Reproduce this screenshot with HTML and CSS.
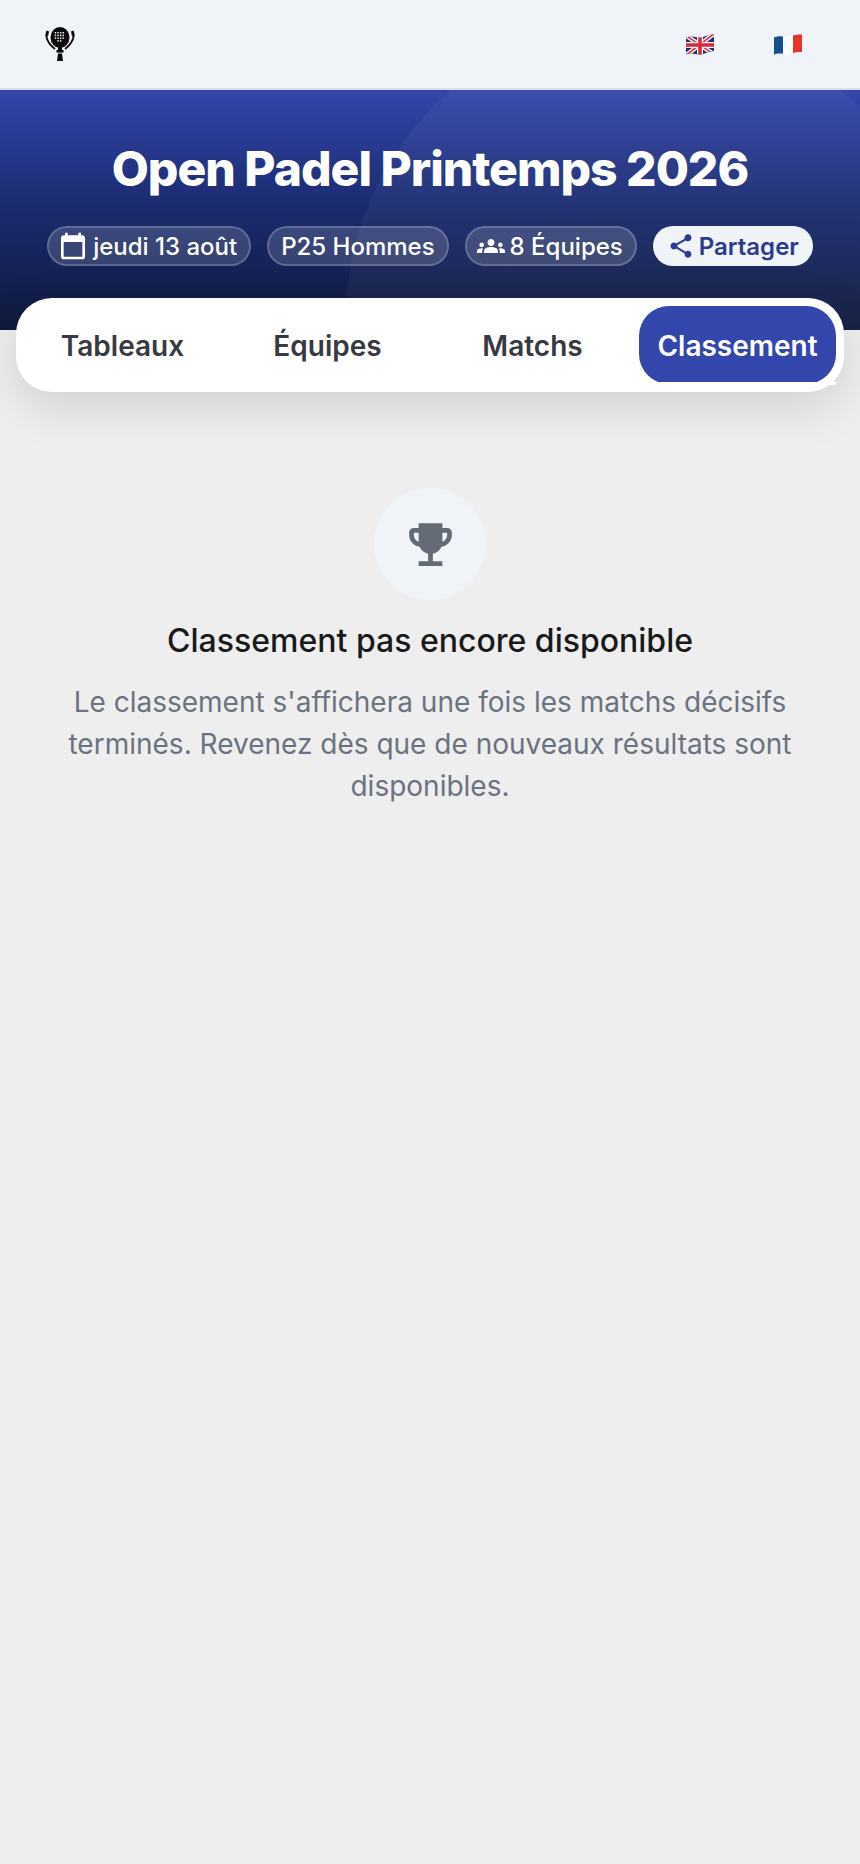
FILE: index.html
```html
<!DOCTYPE html>
<html lang="fr">
<head>
    <meta charset="UTF-8">
    <meta name="viewport" content="width=device-width, initial-scale=1.0">
    <title>Open Padel Printemps 2026</title>
    <link rel="stylesheet" href="styles.css">
</head>
<body>
    <header class="topbar">
        <a class="logo" href="#">
            <svg width="40" height="40" viewBox="0 0 40 40">
                <ellipse cx="20" cy="13.500" rx="9.500" ry="10.500" fill="#0a0a0a"/>
                <path d="M7.500 7.500C5 11 6.500 18.500 15 25" fill="none" stroke="#0a0a0a" stroke-width="1.800"/>
                <path d="M32.500 7.500C35 11 33.500 18.500 25 25" fill="none" stroke="#0a0a0a" stroke-width="1.800"/>
                <path d="M6.500 6.500l2.500 1-1 5-2.500-1z" fill="#0a0a0a"/>
                <path d="M33.500 6.500l-2.500 1 1 5 2.500-1z" fill="#0a0a0a"/>
                <g fill="#e8ecf2">
                    <rect x="14.700" y="8" width="1.500" height="1.500"/><rect x="17.300" y="8" width="1.500" height="1.500"/><rect x="19.900" y="8" width="1.500" height="1.500"/><rect x="22.500" y="8" width="1.500" height="1.500"/>
                    <rect x="14.700" y="10.700" width="1.500" height="1.500"/><rect x="17.300" y="10.700" width="1.500" height="1.500"/><rect x="19.900" y="10.700" width="1.500" height="1.500"/><rect x="22.500" y="10.700" width="1.500" height="1.500"/>
                    <rect x="14.700" y="13.400" width="1.500" height="1.500"/><rect x="17.300" y="13.400" width="1.500" height="1.500"/><rect x="19.900" y="13.400" width="1.500" height="1.500"/><rect x="22.500" y="13.400" width="1.500" height="1.500"/>
                    <rect x="17.300" y="16.100" width="1.500" height="1.500"/><rect x="19.900" y="16.100" width="1.500" height="1.500"/>
                </g>
                <rect x="18" y="23" width="4" height="3" fill="#0a0a0a"/>
                <rect x="16.500" y="26" width="7" height="2.600" fill="#0a0a0a"/>
                <path d="M18 29.500h4l1 7.500h-6z" fill="#0a0a0a"/>
            </svg>
        </a>
        <nav class="langs">
            <a class="lang" href="#">
                <svg width="30" height="24" viewBox="0 0 30 24">
                    <defs>
                        <clipPath id="waveUk"><path d="M1 5.500C8 2.500 12 7 18 5c4-1.300 7-2.300 11-3v17c-4 .6-7 1.700-11 3-6 2-10-2.500-17 .5z"/></clipPath>
                    </defs>
                    <g clip-path="url(#waveUk)">
                        <rect width="30" height="24" fill="#1f2f6e"/>
                        <path d="M0 3l30 20M30 1L0 24" stroke="#f4f4f6" stroke-width="4.500"/>
                        <path d="M0 3l30 20M30 1L0 24" stroke="#d8283c" stroke-width="1.500"/>
                        <path d="M15 0v24M0 13h30" stroke="#f4f4f6" stroke-width="6"/>
                        <path d="M15 0v24M0 13h30" stroke="#d8283c" stroke-width="3.500"/>
                    </g>
                </svg>
            </a>
            <a class="lang" href="#">
                <svg width="30" height="24" viewBox="0 0 30 24">
                    <defs>
                        <clipPath id="waveFr"><path d="M1 5.500C8 2.500 12 6 18 4c4-1.300 7-1.500 11-1.500V20c-4 0-7 .2-11 1.500-6 2-10-1.500-17 1z"/></clipPath>
                    </defs>
                    <g clip-path="url(#waveFr)">
                        <rect width="10" height="24" fill="#14508f"/>
                        <rect x="10" width="10" height="24" fill="#ffffff"/>
                        <rect x="20" width="10" height="24" fill="#e8352c"/>
                    </g>
                </svg>
            </a>
        </nav>
    </header>

    <section class="hero">
        <div class="hero-circle"></div>
        <h1>Open Padel Printemps 2026</h1>
        <div class="chips">
            <span class="chip">
                <svg class="icon-date" width="32" height="32" viewBox="0 0 24 24" fill="currentColor"><path d="M19 4h-1V2h-2v2H8V2H6v2H5c-1.100 0-2 .9-2 2v14c0 1.100.9 2 2 2h14c1.100 0 2-.9 2-2V6c0-1.100-.9-2-2-2zm0 16H5V9h14v11z"/></svg>
                jeudi 13 août
            </span>
            <span class="chip">P25 Hommes</span>
            <span class="chip chip-teams">
                <svg class="icon-teams" width="28" height="28" viewBox="0 0 24 24" fill="currentColor"><path d="M12 12.750c1.630 0 3.070.39 4.240.9 1.080.48 1.760 1.560 1.760 2.730V18H6v-1.610c0-1.180.68-2.260 1.760-2.730 1.170-.52 2.610-.91 4.240-.91zM4 13c1.100 0 2-.9 2-2s-.9-2-2-2-2 .9-2 2 .9 2 2 2zm1.130 1.100C4.760 14.040 4.390 14 4 14c-.99 0-1.930.21-2.780.58C.48 14.900 0 15.620 0 16.430V18h4.500v-1.610c0-.83.23-1.610.63-2.290zM20 13c1.100 0 2-.9 2-2s-.9-2-2-2-2 .9-2 2 .9 2 2 2zm4 3.430c0-.81-.48-1.530-1.220-1.850-.85-.37-1.790-.58-2.780-.58-.39 0-.76.04-1.130.1.400.68.630 1.460.630 2.290V18H24v-1.570zM12 6c1.660 0 3 1.340 3 3s-1.340 3-3 3-3-1.340-3-3 1.340-3 3-3z"/></svg>
                8 Équipes
            </span>
            <button class="chip-share" type="button">
                <svg width="28" height="28" viewBox="0 0 24 24" fill="currentColor"><path d="M18 16.080c-.76 0-1.440.3-1.960.77L8.910 12.700c.05-.23.090-.46.090-.7s-.04-.47-.09-.7l7.050-4.110c.54.5 1.250.81 2.040.81 1.660 0 3-1.340 3-3s-1.340-3-3-3-3 1.340-3 3c0 .24.040.47.090.7L8.040 9.810C7.500 9.310 6.790 9 6 9c-1.660 0-3 1.340-3 3s1.340 3 3 3c.79 0 1.500-.31 2.040-.81l7.120 4.160c-.05.21-.08.43-.08.650 0 1.610 1.310 2.920 2.920 2.920s2.920-1.310 2.920-2.920-1.310-2.920-2.920-2.920z"/></svg>
                Partager
            </button>
        </div>
    </section>

    <nav class="tabs">
        <a class="tab" href="#">Tableaux</a>
        <a class="tab" href="#">Équipes</a>
        <a class="tab" href="#">Matchs</a>
        <a class="tab tab-active" href="#">Classement</a>
    </nav>

    <main class="empty">
        <div class="empty-icon">
            <svg width="57" height="57" viewBox="0 0 24 24" fill="#646b76"><path d="M19 5h-2V3H7v2H5c-1.100 0-2 .9-2 2v1c0 2.550 1.920 4.630 4.390 4.940.63 1.500 1.980 2.630 3.610 2.960V19H7v2h10v-2h-4v-3.100c1.630-.33 2.980-1.460 3.610-2.960C19.080 12.630 21 10.550 21 8V7c0-1.100-.9-2-2-2zM5 8V7h2v3.820C5.840 10.400 5 9.300 5 8zm14 0c0 1.300-.84 2.400-2 2.820V7h2v1z"/></svg>
        </div>
        <h2>Classement pas encore disponible</h2>
        <p>Le classement s'affichera une fois les matchs décisifs terminés. Revenez dès que de nouveaux résultats sont disponibles.</p>
    </main>
</body>
</html>
```

FILE: styles.css
```css
* {
    box-sizing: border-box;
}
body {
    font-family: Inter, "Noto Sans", sans-serif;
    background-color: #eeeeee;
    margin: 0;
    min-height: 100vh;
}
a {
    text-decoration: none;
    color: inherit;
}
.topbar {
    height: 90px;
    background-color: #f0f4f8;
    border-bottom: 2px solid #d9dfe5;
    display: flex;
    justify-content: space-between;
    align-items: center;
    padding: 0 40px;
}
.logo {
    display: flex;
}
.langs {
    display: flex;
    gap: 58px;
    padding-right: 17px;
}
.lang {
    display: flex;
}
.hero {
    position: relative;
    overflow: hidden;
    height: 240px;
    background: linear-gradient(180deg, #3346ab 0%, #1a2a6e 50%, #0f1a3c 100%);
    padding-top: 50px;
    color: white;
}
.hero-circle {
    position: absolute;
    top: -72px;
    right: -86px;
    width: 600px;
    height: 600px;
    border-radius: 50%;
    background: rgba(255, 255, 255, 0.04);
}
h1 {
    position: relative;
    margin: 0;
    font-size: 48px;
    line-height: 58px;
    font-weight: 800;
    letter-spacing: -1px;
    text-align: center;
}
.chips {
    position: relative;
    display: flex;
    justify-content: center;
    gap: 16px;
    margin-top: 28px;
}
.chip, .chip-share {
    display: flex;
    align-items: center;
    gap: 4px;
    height: 40px;
    border-radius: 20px;
    font-family: inherit;
    font-size: 24px;
    white-space: nowrap;
}
.chip {
    padding: 0 12px;
    background: rgba(255, 255, 255, 0.15);
    border: 2px solid rgba(255, 255, 255, 0.2);
    font-weight: 500;
}
.chip-teams {
    gap: 5px;
}
.icon-date {
    margin-left: -4px;
}
.icon-teams {
    margin-left: -2px;
}
.chip-share {
    padding: 0 14px;
    background: #f0f4f8;
    border: none;
    color: #2c3a8c;
    font-weight: 600;
}
.tabs {
    position: relative;
    display: grid;
    grid-template-columns: repeat(4, 1fr);
    gap: 8px;
    height: 94px;
    margin: -32px 16px 0;
    padding: 8px;
    background: white;
    border-radius: 36px;
    box-shadow: 0 14px 48px rgba(0, 0, 0, 0.13);
}
.tab {
    position: relative;
    display: flex;
    justify-content: center;
    align-items: center;
    padding-top: 2px;
    border-radius: 30px;
    font-size: 28px;
    font-weight: 600;
    color: #373a40;
    white-space: nowrap;
}
.tab-active {
    background-color: #3346ab;
    color: white;
}
/* thin bar under the selected tab */
.tab-active::after {
    content: "";
    position: absolute;
    left: 0;
    right: 0;
    bottom: -1px;
    height: 3px;
    background: white;
}
.empty {
    display: flex;
    flex-direction: column;
    align-items: center;
    padding: 96px 48px 0;
    text-align: center;
}
.empty-icon {
    display: flex;
    justify-content: center;
    align-items: center;
    width: 112px;
    height: 112px;
    border-radius: 50%;
    background-color: #f0f4f8;
}
h2 {
    margin: 21px 0 0;
    font-size: 32px;
    line-height: 40px;
    font-weight: 500;
    color: #1a1a1a;
}
.empty p {
    margin: 20px 0 0;
    font-size: 28px;
    line-height: 42px;
    color: #6b7280;
}
```
